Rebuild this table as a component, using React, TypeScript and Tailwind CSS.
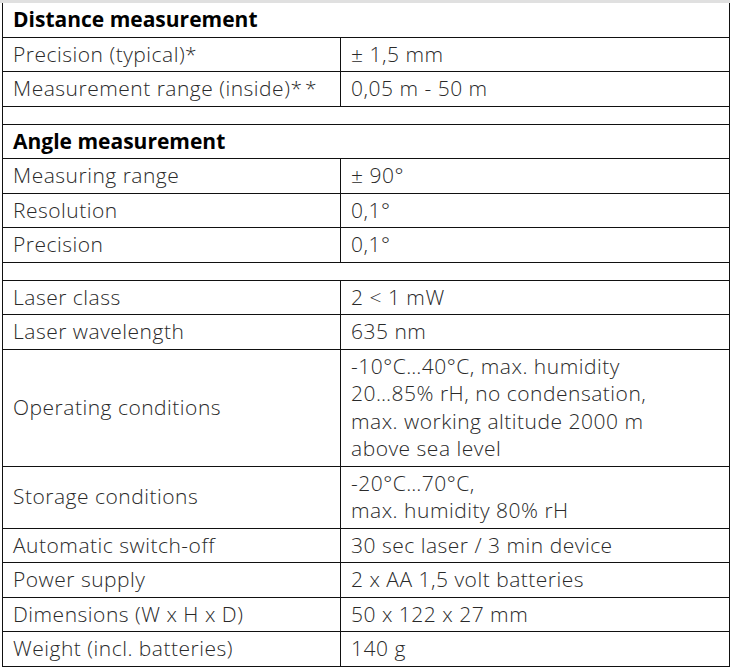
import React from "react";

type Row =
  | { kind: "header"; text: string }
  | { kind: "spacer" }
  | { kind: "data"; label: React.ReactNode; value: string[] };

const rows: Row[] = [
  { kind: "header", text: "Distance measurement" },
  { kind: "data", label: "Precision (typical)*", value: ["± 1,5 mm"] },
  {
    kind: "data",
    label: (
      <>
        Measurement range (inside)<span className="tracking-[3px]">**</span>
      </>
    ),
    value: ["0,05 m - 50 m"],
  },
  { kind: "spacer" },
  { kind: "header", text: "Angle measurement" },
  { kind: "data", label: "Measuring range", value: ["± 90°"] },
  { kind: "data", label: "Resolution", value: ["0,1°"] },
  { kind: "data", label: "Precision", value: ["0,1°"] },
  { kind: "spacer" },
  { kind: "data", label: "Laser class", value: ["2 < 1 mW"] },
  { kind: "data", label: "Laser wavelength", value: ["635 nm"] },
  {
    kind: "data",
    label: "Operating conditions",
    value: [
      "-10°C…40°C, max. humidity",
      "20…85% rH, no condensation,",
      "max. working altitude 2000 m",
      "above sea level",
    ],
  },
  {
    kind: "data",
    label: "Storage conditions",
    value: ["-20°C…70°C,", "max. humidity 80% rH"],
  },
  { kind: "data", label: "Automatic switch-off", value: ["30 sec laser / 3 min device"] },
  { kind: "data", label: "Power supply", value: ["2 x AA 1,5 volt batteries"] },
  { kind: "data", label: "Dimensions (W x H x D)", value: ["50 x 122 x 27 mm"] },
  { kind: "data", label: "Weight (incl. batteries)", value: ["140 g"] },
];

export default function App() {
  return (
    <div
      className="w-[735px] h-[671px] bg-white overflow-hidden"
      style={{ fontFamily: '"Open Sans", "Noto Sans", sans-serif' }}
    >
      <div className="w-[730px] h-[3px] bg-[#e0e0e0]" />
      <div className="ml-[2px] w-[728px] border-l border-r border-[#111]">
        {rows.map((r, i) => {
          if (r.kind === "header") {
            return (
              <div
                key={i}
                className="border-b border-[#111] pl-[10px] py-[3px] text-[21px] leading-[27.5px] font-bold text-black"
              >
                {r.text}
              </div>
            );
          }
          if (r.kind === "spacer") {
            return <div key={i} className="h-[18px] border-b border-[#111]" />;
          }
          return (
            <div
              key={i}
              className="grid grid-cols-[338px_1fr] border-b border-[#111] text-[21px] leading-[27.5px] font-light tracking-[0.5px] text-[#2a2a2a]"
            >
              <div className="border-r border-[#111] pl-[10px] py-[3px] flex items-center whitespace-nowrap">
                {r.label}
              </div>
              <div className="pl-[10px] py-[3px] whitespace-nowrap">
                {r.value.map((v, j) => (
                  <div key={j}>{v}</div>
                ))}
              </div>
            </div>
          );
        })}
      </div>
    </div>
  );
}
